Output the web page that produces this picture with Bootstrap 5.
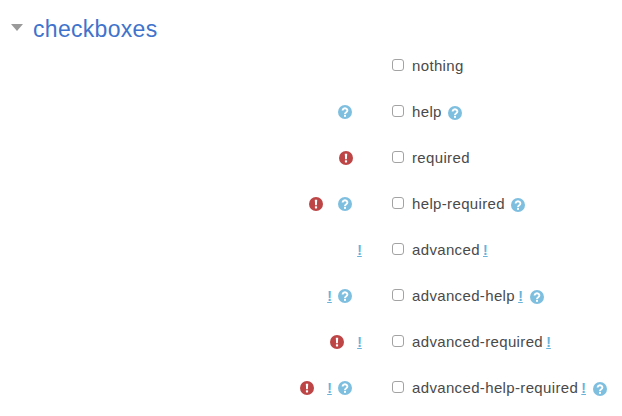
<!DOCTYPE html>
<html lang="en">
<head>
  <meta charset="UTF-8" />
  <meta name="viewport" content="width=device-width, initial-scale=1" />
  <title>checkboxes</title>
  <link href="https://cdn.jsdelivr.net/npm/bootstrap@5.3.0/dist/css/bootstrap.min.css" rel="stylesheet">
  <style>
    body {
      font-family: "Liberation Sans", Arial, sans-serif;
      font-size: 15px;
      color: #4a4a4a;
      background: #fff;
      overflow: hidden;
    }
    .sec-head { padding: 15px 0 0 11px; height: 43px; }
    .sec-caret {
      width: 0; height: 0; margin-right: 10px; margin-top: -4px;
      border-left: 6.5px solid transparent;
      border-right: 6.5px solid transparent;
      border-top: 7px solid #9a9a9a;
    }
    .sec-title { font-size: 23px; line-height: 29px; letter-spacing: .3px; color: #3f73cc; margin: 0; font-weight: 400; }
    .frow { height: 46px; }
    .flabel { width: 392px; padding-right: 29px; }
    .fctl { font-size: 15px; line-height: 16px; letter-spacing: .35px; }
    .fbox {
      width: 12px; height: 12px; margin: 0 8px 2px 0; flex: none;
      border: 1px solid #a3a3a3; border-radius: 3px; background: #fff;
      appearance: none; -webkit-appearance: none;
    }
    .ic { width: 14px; height: 14px; flex: none; display: block; }
    .ic-q { margin-right: 11px; }
    .ic-r { margin-right: 10px; }
    .ic-a { color: #68b3da; font-size: 14px; font-weight: 700; line-height: 14px; text-decoration: underline; width: 5px; text-align: center; }
    .flabel .ic-a { margin-right: 1px; }
    .ic-r + .ic { margin-left: 5px; }
    .flabel .ic-r + .ic-a { margin-left: 3px; }
    .flabel .ic-a + .ic-q { margin-left: 5px; }
    .fctl .ic-inline { margin: 1px 0 0 6px; }
    .fctl .ic-a { margin: 0 0 0 3px; letter-spacing: 0; }
    .fctl .ic-a + .ic-inline { margin-left: 7px; }
  </style>
</head>
<body>
  <svg width="0" height="0" class="position-absolute">
    <symbol id="i-help" viewBox="0 0 14 14">
      <circle cx="7" cy="7" r="7" fill="#7ebfe0"/>
      <path d="M4.6 5.4a2.4 2.1 0 1 1 3.7 1.8c-.9.6-1.3.9-1.3 1.7" fill="none" stroke="#fff" stroke-width="1.9"/>
      <rect x="6" y="9.8" width="2" height="2" fill="#fff"/>
    </symbol>
    <symbol id="i-req" viewBox="0 0 14 14">
      <circle cx="7" cy="7" r="7" fill="#bd4545"/>
      <path d="M5.8 2.8h2.4l-.3 5.4H6.1z" fill="#fff"/>
      <rect x="5.9" y="9.3" width="2.2" height="2.2" rx=".4" fill="#fff"/>
    </symbol>
  </svg>

  <div class="sec-head d-flex align-items-center">
    <span class="sec-caret"></span>
    <h3 class="sec-title">checkboxes</h3>
  </div>

  <div class="frow d-flex align-items-center">
    <div class="flabel d-flex justify-content-end align-items-center"></div>
    <label class="fctl d-flex align-items-center"><input type="checkbox" class="fbox">nothing</label>
  </div>

  <div class="frow d-flex align-items-center">
    <div class="flabel d-flex justify-content-end align-items-center">
      <svg class="ic ic-q"><use href="#i-help"/></svg>
    </div>
    <label class="fctl d-flex align-items-center"><input type="checkbox" class="fbox">help<svg class="ic ic-inline"><use href="#i-help"/></svg></label>
  </div>

  <div class="frow d-flex align-items-center">
    <div class="flabel d-flex justify-content-end align-items-center">
      <svg class="ic ic-r"><use href="#i-req"/></svg>
    </div>
    <label class="fctl d-flex align-items-center"><input type="checkbox" class="fbox">required</label>
  </div>

  <div class="frow d-flex align-items-center">
    <div class="flabel d-flex justify-content-end align-items-center">
      <svg class="ic ic-r"><use href="#i-req"/></svg>
      <svg class="ic ic-q"><use href="#i-help"/></svg>
    </div>
    <label class="fctl d-flex align-items-center"><input type="checkbox" class="fbox">help-required<svg class="ic ic-inline"><use href="#i-help"/></svg></label>
  </div>

  <div class="frow d-flex align-items-center">
    <div class="flabel d-flex justify-content-end align-items-center">
      <span class="ic-a">!</span>
    </div>
    <label class="fctl d-flex align-items-center"><input type="checkbox" class="fbox">advanced<span class="ic-a">!</span></label>
  </div>

  <div class="frow d-flex align-items-center">
    <div class="flabel d-flex justify-content-end align-items-center">
      <span class="ic-a">!</span>
      <svg class="ic ic-q"><use href="#i-help"/></svg>
    </div>
    <label class="fctl d-flex align-items-center"><input type="checkbox" class="fbox">advanced-help<span class="ic-a">!</span><svg class="ic ic-inline"><use href="#i-help"/></svg></label>
  </div>

  <div class="frow d-flex align-items-center">
    <div class="flabel d-flex justify-content-end align-items-center">
      <svg class="ic ic-r"><use href="#i-req"/></svg>
      <span class="ic-a">!</span>
    </div>
    <label class="fctl d-flex align-items-center"><input type="checkbox" class="fbox">advanced-required<span class="ic-a">!</span></label>
  </div>

  <div class="frow d-flex align-items-center">
    <div class="flabel d-flex justify-content-end align-items-center">
      <svg class="ic ic-r"><use href="#i-req"/></svg>
      <span class="ic-a">!</span>
      <svg class="ic ic-q"><use href="#i-help"/></svg>
    </div>
    <label class="fctl d-flex align-items-center"><input type="checkbox" class="fbox">advanced-help-required<span class="ic-a">!</span><svg class="ic ic-inline"><use href="#i-help"/></svg></label>
  </div>

  <script src="https://cdn.jsdelivr.net/npm/bootstrap@5.3.0/dist/js/bootstrap.bundle.min.js"></script>
</body>
</html>
